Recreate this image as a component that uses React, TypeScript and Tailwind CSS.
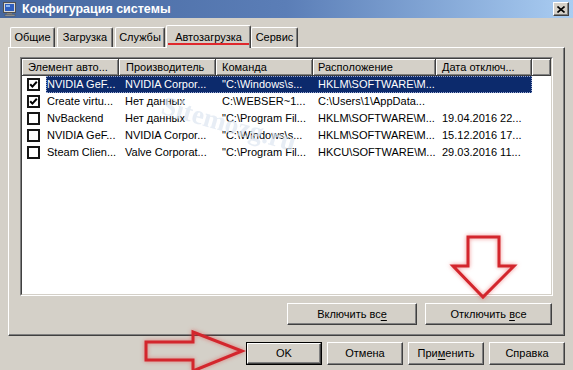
import React from "react";

const raised =
  "border border-t-white border-l-white border-r-[#404040] border-b-[#404040] shadow-[inset_-1px_-1px_0_#808080]";

function Btn({ children, className = "" }: { children: React.ReactNode; className?: string }) {
  return (
    <div className={`flex items-center justify-center text-[11px] text-black bg-[#d4d0c8] ${raised} ${className}`}>
      {children}
    </div>
  );
}

function Check({ checked }: { checked: boolean }) {
  return (
    <div className="w-[13px] h-[13px] border-2 border-[#151515] bg-white flex items-center justify-center">
      {checked && (
        <svg width="9" height="9" viewBox="0 0 9 9">
          <path d="M1.2 4.2 L3.4 6.6 L7.8 1.8" stroke="#000" strokeWidth="2" fill="none" />
        </svg>
      )}
    </div>
  );
}

type Row = { checked: boolean; cells: string[]; selected?: boolean };

const rows: Row[] = [
  {
    checked: true,
    selected: true,
    cells: ["NVIDIA GeF...", "NVIDIA Corpor...", "\"C:\\Windows\\s...", "HKLM\\SOFTWARE\\M...", ""],
  },
  {
    checked: true,
    cells: ["Create virtu...", "Нет данных", "C:\\WEBSER~1...", "C:\\Users\\1\\AppData...", ""],
  },
  {
    checked: false,
    cells: ["NvBackend", "Нет данных", "\"C:\\Program Fil...", "HKLM\\SOFTWARE\\M...", "19.04.2016 22..."],
  },
  {
    checked: false,
    cells: ["NVIDIA GeF...", "NVIDIA Corpor...", "\"C:\\Windows\\s...", "HKLM\\SOFTWARE\\M...", "15.12.2016 17..."],
  },
  {
    checked: false,
    cells: ["Steam Clien...", "Valve Corporat...", "\"C:\\Program Fil...", "HKCU\\SOFTWARE\\M...", "29.03.2016 11..."],
  },
];

const cellCls = [
  "w-[73px] pl-[1px]",
  "w-[97px] pl-[6px]",
  "w-[97px] pl-[6px]",
  "w-[123px] pl-[5px]",
  "w-[96px] pl-[6px]",
];

const headCell =
  "h-full flex items-center border-r border-b border-r-[#404040] border-b-[#404040] shadow-[inset_1px_1px_0_#fff,inset_-1px_-1px_0_#808080] overflow-hidden whitespace-nowrap";

function Tab({ label, w, selected = false, className = "" }: { label: string; w: string; selected?: boolean; className?: string }) {
  if (selected) {
    return (
      <div
        className={`relative z-10 ${w} h-[23px] -mb-px flex items-start justify-center pt-[3px] bg-[#d4d0c8] border-t border-l border-r border-t-white border-l-white border-r-[#404040] shadow-[inset_-1px_0_0_#808080] rounded-t-[2px] text-[11px] ${className}`}
      >
        {label}
        <div className="absolute left-[1px] right-[1px] bottom-[3px] h-[2px] bg-[#e0282c]" />
      </div>
    );
  }
  return (
    <div
      className={`${w} h-[20px] flex items-center justify-center bg-[#d4d0c8] border-t border-l border-r border-t-white border-l-white border-r-[#404040] shadow-[inset_-1px_0_0_#808080] rounded-t-[2px] text-[11px] ${className}`}
    >
      {label}
    </div>
  );
}

export default function App() {
  return (
    <div className="w-[573px] h-[370px] relative overflow-hidden bg-[#d4d0c8] flex flex-col font-['Liberation_Sans',Arial,sans-serif] text-black">
      {/* Title bar */}
      <div className="h-[18px] flex items-center pl-[2px] pr-[4px] bg-linear-to-r from-[#46679f] via-[#5b7eb7] via-50% to-[#aacdf2]">
        <svg width="16" height="16" viewBox="0 0 16 16">
          <rect x="1.5" y="1.5" width="12" height="10" fill="#d8d8d8" stroke="#505050" />
          <rect x="3" y="3" width="9" height="7" fill="#2f5fc0" />
          <rect x="4" y="4" width="4" height="2" fill="#8fb8f0" />
          <rect x="5" y="12" width="5" height="1.5" fill="#808080" />
          <rect x="3" y="13.5" width="10" height="1.5" fill="#a0a0a0" stroke="#505050" strokeWidth="0.5" />
        </svg>
        <span className="ml-[4px] text-white font-bold text-[12.5px] leading-none">Конфигурация системы</span>
        <div className={`ml-auto w-[16px] h-[14px] bg-[#d4d0c8] flex items-center justify-center ${raised}`}>
          <svg width="8" height="7" viewBox="0 0 8 7">
            <path d="M0.5 0.5 L7.5 6.5 M7.5 0.5 L0.5 6.5" stroke="#000" strokeWidth="1.6" />
          </svg>
        </div>
      </div>

      {/* Tabs */}
      <div className="h-[29px] flex items-end pl-[10px]">
        <Tab label="Общие" w="w-[45px]" />
        <Tab label="Загрузка" w="w-[56px]" className="ml-[2px]" />
        <Tab label="Службы" w="w-[50px]" className="ml-[2px]" />
        <Tab label="Автозагрузка" w="w-[85px]" selected className="ml-[1px]" />
        <Tab label="Сервис" w="w-[47px]" />
      </div>

      {/* Panel */}
      <div className="ml-[8px] w-[557px] h-[289px] border border-t-white border-l-white border-r-[#404040] border-b-[#404040] shadow-[inset_-1px_-1px_0_#808080] pl-[11px] pt-[9px] flex flex-col">
        {/* List box */}
        <div className="w-[533px] h-[239px] border border-t-[#808080] border-l-[#808080] border-r-white border-b-white">
          <div className="w-full h-full border border-t-[#404040] border-l-[#404040] border-r-[#d4d0c8] border-b-[#d4d0c8] bg-white flex flex-col overflow-hidden">
            {/* header */}
            <div className="h-[17px] flex bg-[#d4d0c8] text-[11px] shrink-0">
              <div className={`${headCell} w-[97px] pl-[6px]`}>Элемент авто...</div>
              <div className={`${headCell} w-[97px] pl-[7px]`}>Производитель</div>
              <div className={`${headCell} w-[97px] pl-[6px]`}>Команда</div>
              <div className={`${headCell} w-[123px] pl-[5px]`}>Расположение</div>
              <div className={`${headCell} w-[96px] pl-[6px]`}>Дата отключ...</div>
              <div className={`${headCell} flex-1`}></div>
            </div>
            {/* rows */}
            {rows.map((r, i) => (
              <div key={i} className="h-[17px] flex items-center text-[11px] shrink-0">
                <div className="w-[24px] h-full flex items-center pl-[5px]">
                  <Check checked={r.checked} />
                </div>
                <div
                  className={
                    r.selected
                      ? "flex h-full items-center bg-[#0c2a6c] text-white outline outline-1 outline-dotted outline-[#9aa8d0] -outline-offset-1"
                      : "flex h-full items-center"
                  }
                >
                  {r.cells.map((c, j) => (
                    <div key={j} className={`${cellCls[j]} whitespace-nowrap overflow-hidden leading-[17px]`}>
                      {c}
                    </div>
                  ))}
                </div>
              </div>
            ))}
          </div>
        </div>
        {/* enable/disable buttons */}
        <div className="w-[533px] mt-[7px] flex justify-end gap-[8px] pr-[1px]">
          <Btn className="w-[130px] h-[22px]">
            <span>
              Включить вс<u className="underline-offset-2">е</u>
            </span>
          </Btn>
          <Btn className="w-[127px] h-[22px]">
            <span>
              Отключить <u className="underline-offset-2">в</u>се
            </span>
          </Btn>
        </div>
      </div>

      {/* Bottom buttons */}
      <div className="mt-[6px] ml-[246px] flex gap-[5px]">
        <div className="w-[76px] h-[23px] border border-black">
          <Btn className="w-full h-full">OK</Btn>
        </div>
        <Btn className="w-[76px] h-[23px]">Отмена</Btn>
        <Btn className="w-[76px] h-[23px]">
          <span>
            При<u className="underline-offset-2">м</u>енить
          </span>
        </Btn>
        <Btn className="w-[76px] h-[23px]">Справка</Btn>
      </div>

      {/* Watermark */}
      <div className="absolute left-[166px] top-[92px] rotate-[16deg] origin-top-left pointer-events-none font-['Liberation_Serif',serif] font-bold text-[27px] leading-none text-[#dde6f1] opacity-70">
        Sitemozg.ru
      </div>

      {/* Red annotation arrows */}
      <svg
        className="absolute left-0 top-0 pointer-events-none drop-shadow-[0_0_2px_rgba(230,60,60,0.6)]"
        width="573"
        height="370"
        viewBox="0 0 573 370"
      >
        <polygon
          points="146,342 193,342 193,332 242,351 193,371 193,360 146,360"
          fill="none"
          stroke="#d3262d"
          strokeWidth="3"
          strokeLinejoin="miter"
        />
        <polygon
          points="468,237 499,237 499,266 514,266 483,297 453,266 468,266"
          fill="none"
          stroke="#d3262d"
          strokeWidth="3"
          strokeLinejoin="miter"
        />
      </svg>
    </div>
  );
}
